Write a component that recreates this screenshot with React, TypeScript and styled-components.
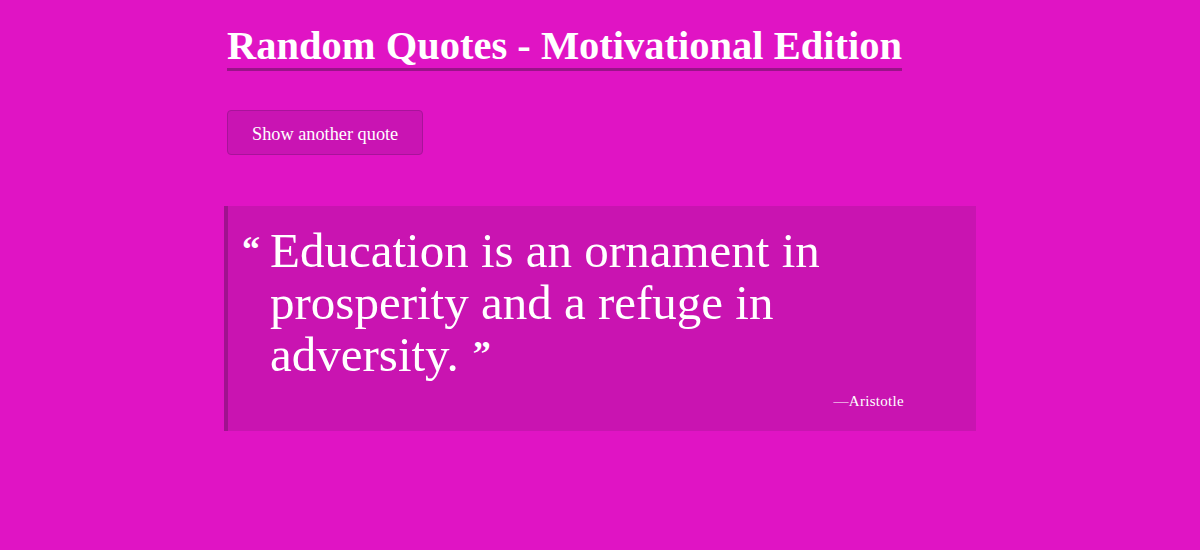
import React from 'react';
import styled, {createGlobalStyle} from 'styled-components';

const GlobalStyle = createGlobalStyle`
    html, body {
        margin: 0;
        padding: 0;
        background: #e014c4;
        font-family: "Liberation Serif", "DejaVu Serif", serif;
        color: #ffffff;
    }
`;

const Page = styled.main`
    width: 752px;
    margin: 0 auto;
    padding-top: 24px;
    display: flex;
    flex-direction: column;
    align-items: flex-start;
`;

const Title = styled.h1`
    margin: 0 0 0 3px;
    font-size: 40.5px;
    font-weight: 700;
    line-height: 44px;
    border-bottom: 3px solid #9b128a;
    padding-bottom: 0;
`;

const Button = styled.button`
    margin: 39px 0 0 3px;
    height: 45px;
    padding: 3px 24px 0;
    background: #c914b3;
    color: #ffffff;
    border: 1px solid #a8139a;
    border-radius: 4px;
    font-family: inherit;
    font-size: 18.3px;
    cursor: pointer;
`;

const Quote = styled.blockquote`
    margin: 51px 0 0 0;
    width: 100%;
    box-sizing: border-box;
    background: #c914b1;
    border-left: 4px solid #a0128f;
    padding: 19px 72px 21px 14px;
    display: flex;
    flex-direction: column;
`;

const QuoteBody = styled.p`
    margin: 0;
    display: flex;
    align-items: flex-start;
    font-size: 49px;
    line-height: 52px;
`;

const Mark = styled.span`
    font-size: 36px;
    font-weight: 700;
    line-height: 36px;
    margin-right: 10px;
    margin-top: 6px;
`;

const Closing = styled.span`
    display: inline-block;
    font-size: 36px;
    font-weight: 700;
    line-height: 36px;
    vertical-align: top;
    margin: 7px 0 0 14px;
`;

const Author = styled.cite`
    align-self: flex-end;
    margin-top: 12px;
    font-style: normal;
    font-size: 15px;
    letter-spacing: 0.3px;
`;

export default function App() {
    return (
        <>
            <GlobalStyle/>
            <Page>
                <Title>Random Quotes - Motivational Edition</Title>
                <Button>Show another quote</Button>
                <Quote>
                    <QuoteBody>
                        <Mark>“</Mark>
                        <span>
                            Education is an ornament in prosperity and a refuge in adversity.
                            <Closing>”</Closing>
                        </span>
                    </QuoteBody>
                    <Author>—Aristotle</Author>
                </Quote>
            </Page>
        </>
    );
}
